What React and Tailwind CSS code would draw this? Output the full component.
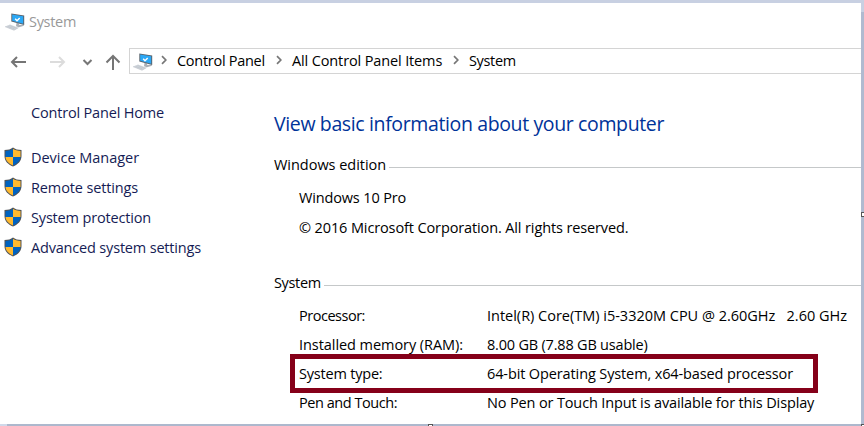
import React from "react";

const links = [
  ["Device Manager", "tracking-[-0.02px]"],
  ["Remote settings", "tracking-[-0.13px]"],
  ["System protection", "tracking-[-0.17px]"],
  ["Advanced system settings", "tracking-[-0.18px]"],
];

const specs = [
  ["Processor:", "tracking-[-0.48px]", "Intel(R) Core(TM) i5-3320M CPU @ 2.60GHz   2.60 GHz", "tracking-[-0.01px]"],
  ["Installed memory (RAM):", "tracking-[-0.06px]", "8.00 GB (7.88 GB usable)", "tracking-[-0.2px]"],
  ["System type:", "tracking-[-0.2px]", "64-bit Operating System, x64-based processor", "tracking-[-0.12px]"],
  ["Pen and Touch:", "tracking-[-0.45px]", "No Pen or Touch Input is available for this Display", "tracking-[-0.14px]"],
];

function Shield() {
  return (
    <svg className="h-5 w-[18px] shrink-0" viewBox="0 0 18 20">
      <path d="M9 .5C7 2.200 4 3 .5 3v6c0 5 3.500 8.500 8.500 10.500C14 17.500 17.500 14 17.500 9V3C14 3 11 2.200 9 .5Z" fill="#505356" />
      <path d="M9 1.800V10H1.500V4C4.500 3.900 7 3.200 9 1.800Z" fill="#0063c0" />
      <path d="M9 1.800C11 3.200 13.500 3.900 16.500 4v6H9Z" fill="#ffb92e" />
      <path d="M1.500 10H9v8.400C4.800 16.600 1.900 14 1.500 10Z" fill="#ffb92e" />
      <path d="M9 10h7.500c-.4 4-3.300 6.600-7.500 8.400Z" fill="#0063c0" />
    </svg>
  );
}

function Computer() {
  return (
    <svg className="h-[18px] w-5 shrink-0" viewBox="0 0 20 18">
      <path d="m11.500 9.800 3 .8-.5 1.400 4.500-.2.500 1-5 1.500-3-1Z" fill="#a9afb6" />
      <path d="M6.300.5 19.200 2.500V12L6.300 8.600Z" fill="#58636d" />
      <path d="M7.200 1.500 18.200 3.200V10.700L7.200 7.800Z" fill="#2ba8f6" />
      <path d="m10.200 5.800 1.800 2 2.700-2.800" fill="none" stroke="#fff" strokeWidth="1.400" />
      <path d="M0 13.600 5 11.500l8.500 3.200L9 17.200Z" fill="#d0d5db" />
      <path d="m2.500 13.400 7 2.500m-5-3.300 7 2.500" stroke="#b5bcc4" strokeWidth=".5" />
      <path d="m0 13.600 9 3.600 4.500-2.500" fill="none" stroke="#b8bec6" strokeWidth=".6" />
    </svg>
  );
}

function Chevron() {
  return (
    <svg className="h-[10px] w-[7px] shrink-0" viewBox="0 0 7 10">
      <path d="m1 1.200 3.800 3.800L1 8.800" fill="none" stroke="#777" strokeWidth="1.700" />
    </svg>
  );
}

function Group({ title, tracking }) {
  return (
    <div className="flex h-[30px] items-center">
      <span className={tracking}>{title}</span>
      <span className="mt-[5px] ml-[3px] h-px flex-1 bg-[#c5c8c9]" />
    </div>
  );
}

export default function App() {
  return (
    <div className="relative flex h-[426px] w-[864px] flex-col overflow-hidden bg-white font-['Open_Sans','Noto_Sans',sans-serif] text-[14.5px] whitespace-pre text-black">
      <div className="h-[3px] shrink-0 bg-[#c8d0e2]" />
      <div className="flex min-h-0 flex-1">
        <div className="flex min-w-0 flex-1 flex-col">
          <header className="flex h-[38px] shrink-0 items-center pl-[5px] text-[#999]">
            <Computer />
            <span className="ml-1 tracking-[-0.3px]">System</span>
          </header>
          <nav className="mt-[7px] flex h-[26px] shrink-0 items-center">
            <svg className="h-[26px] w-[129px] shrink-0" viewBox="0 0 129 26" fill="none" strokeWidth="2">
              <path d="M26 14H12m5-5-5 5 5 5" stroke="#757575" />
              <path d="M50 14h14m-5-5 5 5-5 5" stroke="#dcdcdc" />
              <path d="m83.500 12 4 4 4-4" stroke="#777" />
              <path d="M113 22V8m-6.500 6.500L113 8l6.500 6.500" stroke="#757575" />
            </svg>
            <div className="flex h-[26px] flex-1 items-center border border-r-0 border-[#d4d4d4] pl-[3px]">
              <span className="flex pt-px"><Computer /></span>
              <span className="ml-2 flex pb-[2px]"><Chevron /></span>
              <span className="ml-[9px] w-[88px] tracking-[-0.28px]">Control Panel</span>
              <span className="ml-[11px] flex pb-[2px]"><Chevron /></span>
              <span className="ml-[9px] w-[150px] tracking-[-0.13px]">All Control Panel Items</span>
              <span className="ml-[11px] flex pb-[2px]"><Chevron /></span>
              <span className="ml-[9px] tracking-[-0.35px]">System</span>
            </div>
          </nav>
          <div className="flex flex-1">
            <aside className="w-[274px] shrink-0 pt-6 text-[#151c55]">
              <div className="flex h-[30px] items-center pl-[31px] tracking-[-0.18px]">Control Panel Home</div>
              <div className="mt-[14px]">
                {links.map(([label, tracking]) => (
                  <div key={label} className="flex h-[30px] items-center gap-[9px] pl-1">
                    <Shield />
                    <span className={`pt-px ${tracking}`}>{label}</span>
                  </div>
                ))}
              </div>
            </aside>
            <main className="flex min-w-0 flex-1 flex-col pt-[34px]">
              <h1 className="flex h-[32px] items-center text-[19.5px] text-[#003399] tracking-[-0.37px]">View basic information about your computer</h1>
              <div className="mt-[10px]"><Group title="Windows edition" tracking="tracking-[-0.03px]" /></div>
              <div className="mt-[3px] flex h-[30px] items-center pl-[25px] tracking-[-0.15px]">Windows 10 Pro</div>
              <div className="flex h-[30px] items-center pl-[25px] tracking-[-0.12px]">© 2016 Microsoft Corporation. All rights reserved.</div>
              <div className="mt-[25px]"><Group title="System" tracking="tracking-[-0.35px]" /></div>
              <div className="mt-[3px]">
                {specs.map(([name, nameTracking, value, valueTracking]) => (
                  <div key={name} className="flex h-[29px] items-center pl-[25px]">
                    <span className={`w-[188px] shrink-0 ${nameTracking}`}>{name}</span>
                    <span className={valueTracking}>{value}</span>
                  </div>
                ))}
              </div>
            </main>
          </div>
        </div>
        <div className="w-[3px] shrink-0 border-t-[9px] border-[#c8d0e2] bg-[#b0bad0]" />
      </div>
      <div className="h-[2px] shrink-0 border-l-[7px] border-[#d0d9ea] bg-[#adb8cd]" />
      <div className="absolute top-[354px] left-[290px] h-[39px] w-[528px] border-5 border-[#850019]" />
      <div className="absolute top-[212px] left-[861px] size-[5px] border border-[#555] bg-white" />
      <div className="absolute top-[424px] left-[428px] size-[5px] border border-[#555] bg-white" />
      <div className="absolute top-[424px] left-[861px] size-[5px] border border-[#555] bg-white" />
    </div>
  );
}
